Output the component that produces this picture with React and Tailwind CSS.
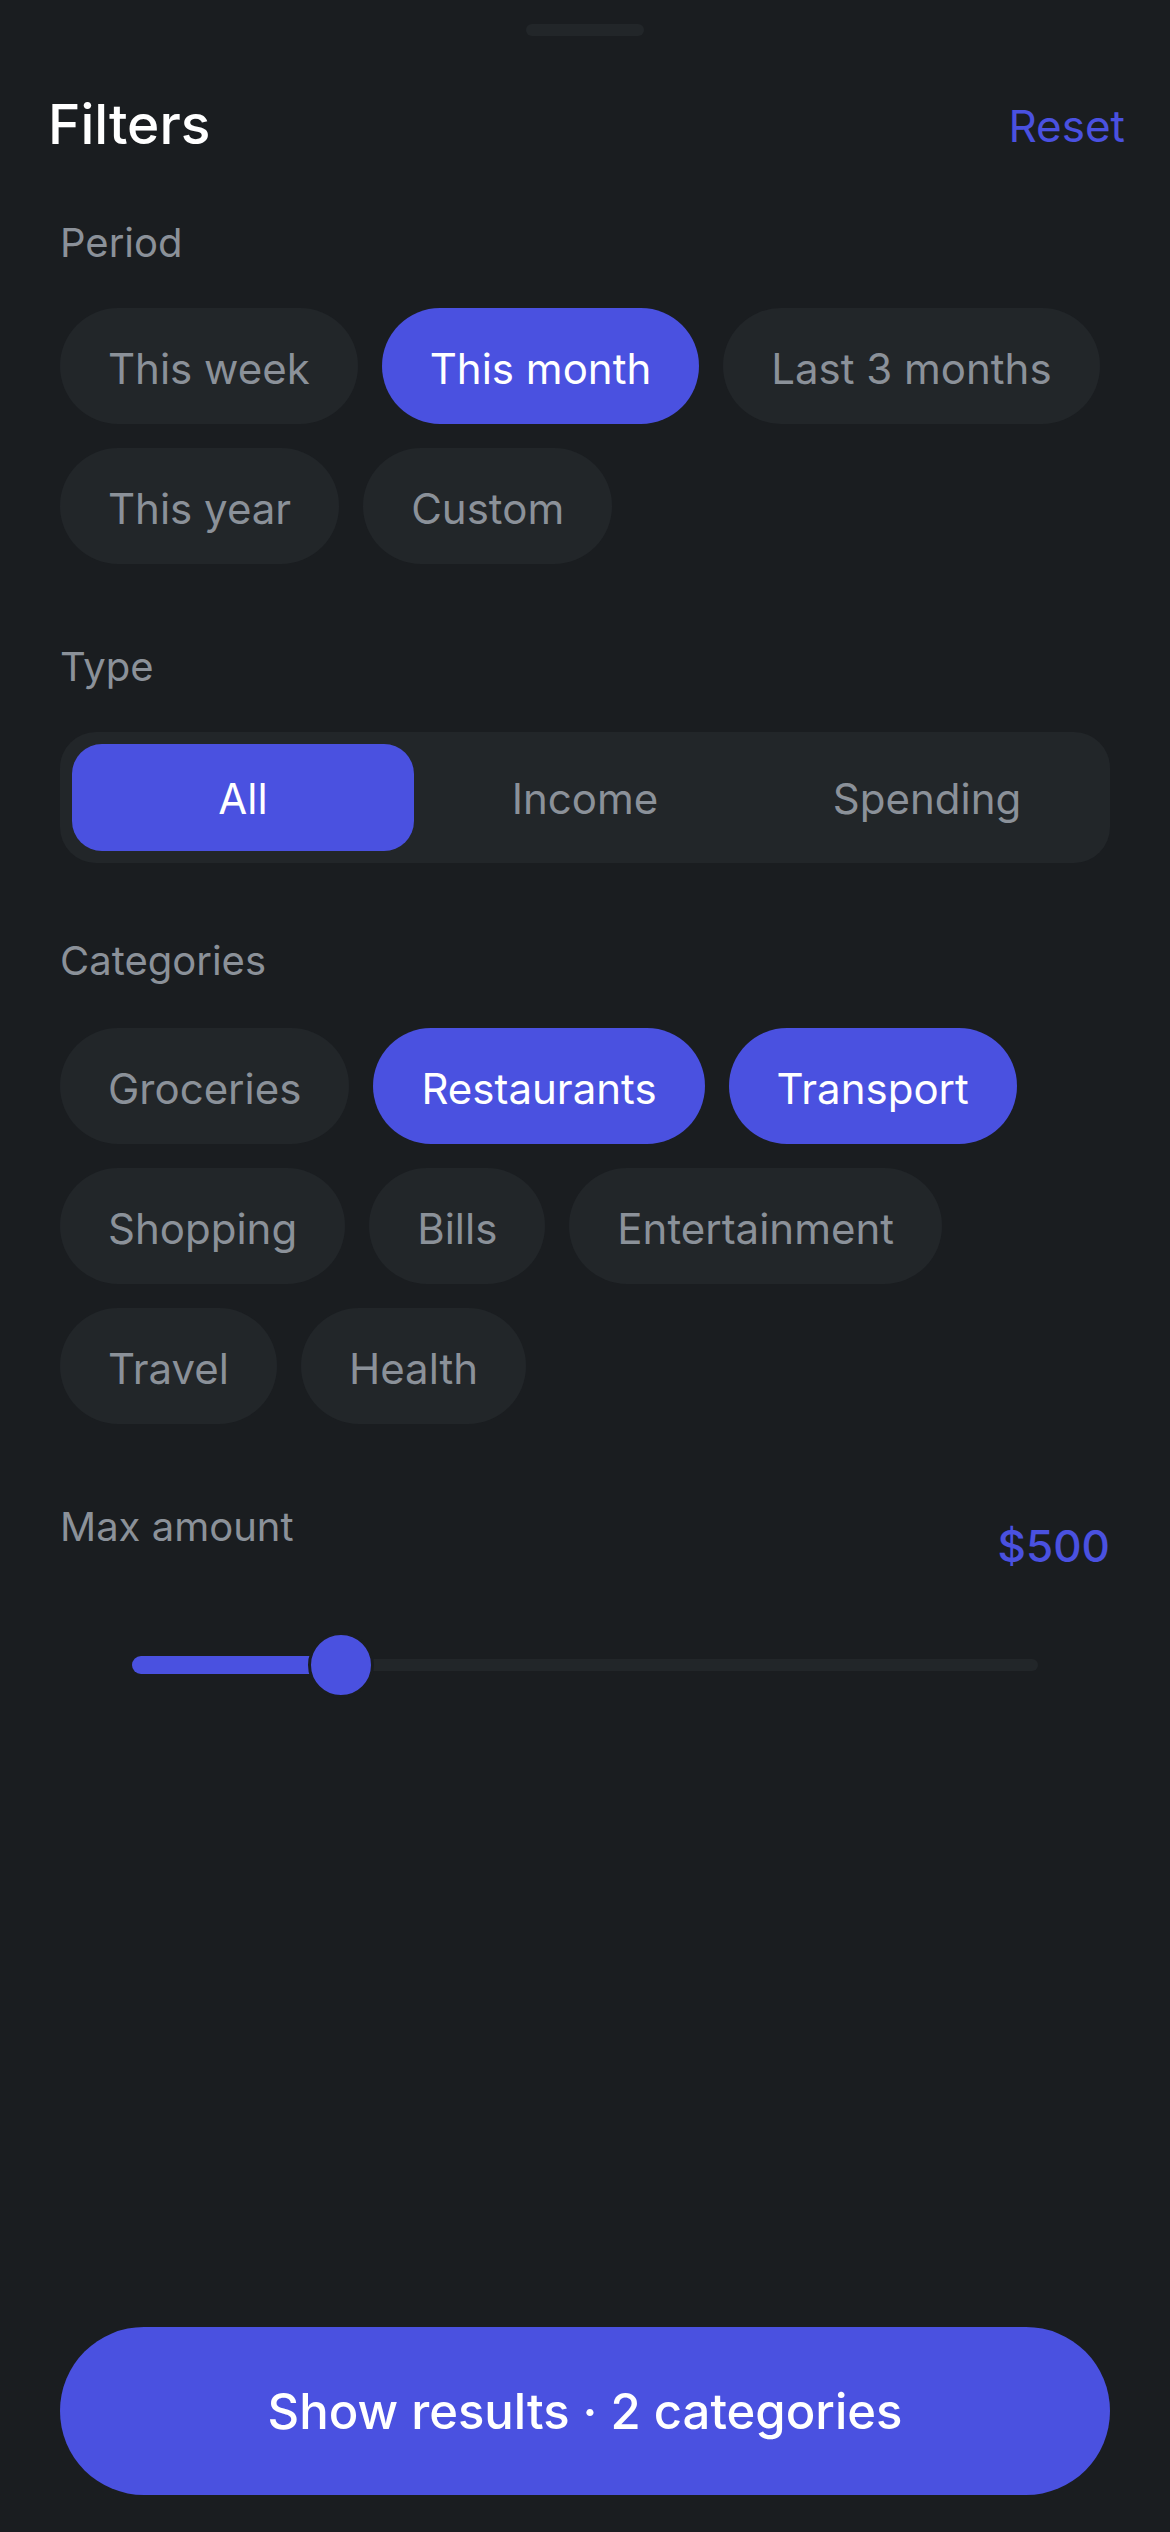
import { useState } from "react";

const periods = ["This week", "This month", "Last 3 months", "This year", "Custom"];
const types = ["All", "Income", "Spending"];
const categories = ["Groceries", "Restaurants", "Transport", "Shopping", "Bills", "Entertainment", "Travel", "Health"];

const Chip = ({ label, active, onClick }) => (
  <button
    onClick={onClick}
    className={`h-[116px] px-[48px] pt-[5px] rounded-full text-[42px] leading-none ${
      active ? "bg-[#4a51e0] text-white" : "bg-[#222629] text-[#8b9199]"
    }`}
  >
    {label}
  </button>
);

const SectionLabel = ({ children, className = "" }) => (
  <div className={`h-[48px] flex items-center text-[40px] leading-none text-[#8b9199] ${className}`}>{children}</div>
);

const App = () => {
  const [period, setPeriod] = useState("This month");
  const [type, setType] = useState("All");
  const [picked, setPicked] = useState(["Restaurants", "Transport"]);

  const toggle = (c) => setPicked((p) => (p.includes(c) ? p.filter((x) => x !== c) : [...p, c]));

  return (
    <div className="w-[1170px] h-[2532px] bg-[#1a1d20] flex flex-col font-['Inter',sans-serif]">
      <div className="mt-[24px] mx-auto w-[118px] h-[12px] rounded-full bg-[#222629]" />

      <div className="mt-[60px] h-[56px] pl-[48px] pr-[45px] flex items-center justify-between">
        <h1 className="text-[55px] leading-none font-medium text-white">Filters</h1>
        <button className="mt-[4px] text-[44px] leading-none text-[#4a51e0]">Reset</button>
      </div>

      <div className="px-[60px]">
        <SectionLabel className="mt-[67px]">Period</SectionLabel>
        <div className="mt-[41px] flex flex-wrap gap-[24px]">
          {periods.map((p) => (
            <Chip key={p} label={p} active={period === p} onClick={() => setPeriod(p)} />
          ))}
        </div>

        <SectionLabel className="mt-[79px]">Type</SectionLabel>
        <div className="mt-[41px] p-[12px] rounded-[36px] bg-[#222629] grid grid-cols-3">
          {types.map((t) => (
            <button
              key={t}
              onClick={() => setType(t)}
              className={`h-[107px] pt-[3px] rounded-[30px] text-[42px] leading-none ${
                type === t ? "bg-[#4a51e0] text-white" : "text-[#8b9199]"
              }`}
            >
              {t}
            </button>
          ))}
        </div>

        <SectionLabel className="mt-[74px]">Categories</SectionLabel>
        <div className="mt-[43px] flex flex-wrap gap-[24px]">
          {categories.map((c) => (
            <Chip key={c} label={c} active={picked.includes(c)} onClick={() => toggle(c)} />
          ))}
        </div>

        <div className="mt-[79px] flex items-start justify-between">
          <SectionLabel>Max amount</SectionLabel>
          <div className="mt-[21px] text-[44px] leading-none font-medium text-[#4a51e0]">$500</div>
        </div>

        <div className="mt-[64px] px-[72px]">
          <div className="relative h-[66px] flex items-center">
            <div className="w-full h-[12px] rounded-full bg-[#222629]" />
            <div className="absolute left-0 w-[214px] h-[18px] rounded-full bg-[#4a51e0]" />
            <div className="absolute left-[176px] w-[66px] h-[66px] rounded-full bg-[#4a51e0] border-[3px] border-[#1a1d20]" />
          </div>
        </div>
      </div>

      <div className="mt-auto mb-[37px] px-[60px]">
        <button className="w-full h-[168px] rounded-full bg-[#4a51e0] text-white text-[49px] leading-none font-medium">
          Show results · {picked.length} categories
        </button>
      </div>
    </div>
  );
};

export default App;
